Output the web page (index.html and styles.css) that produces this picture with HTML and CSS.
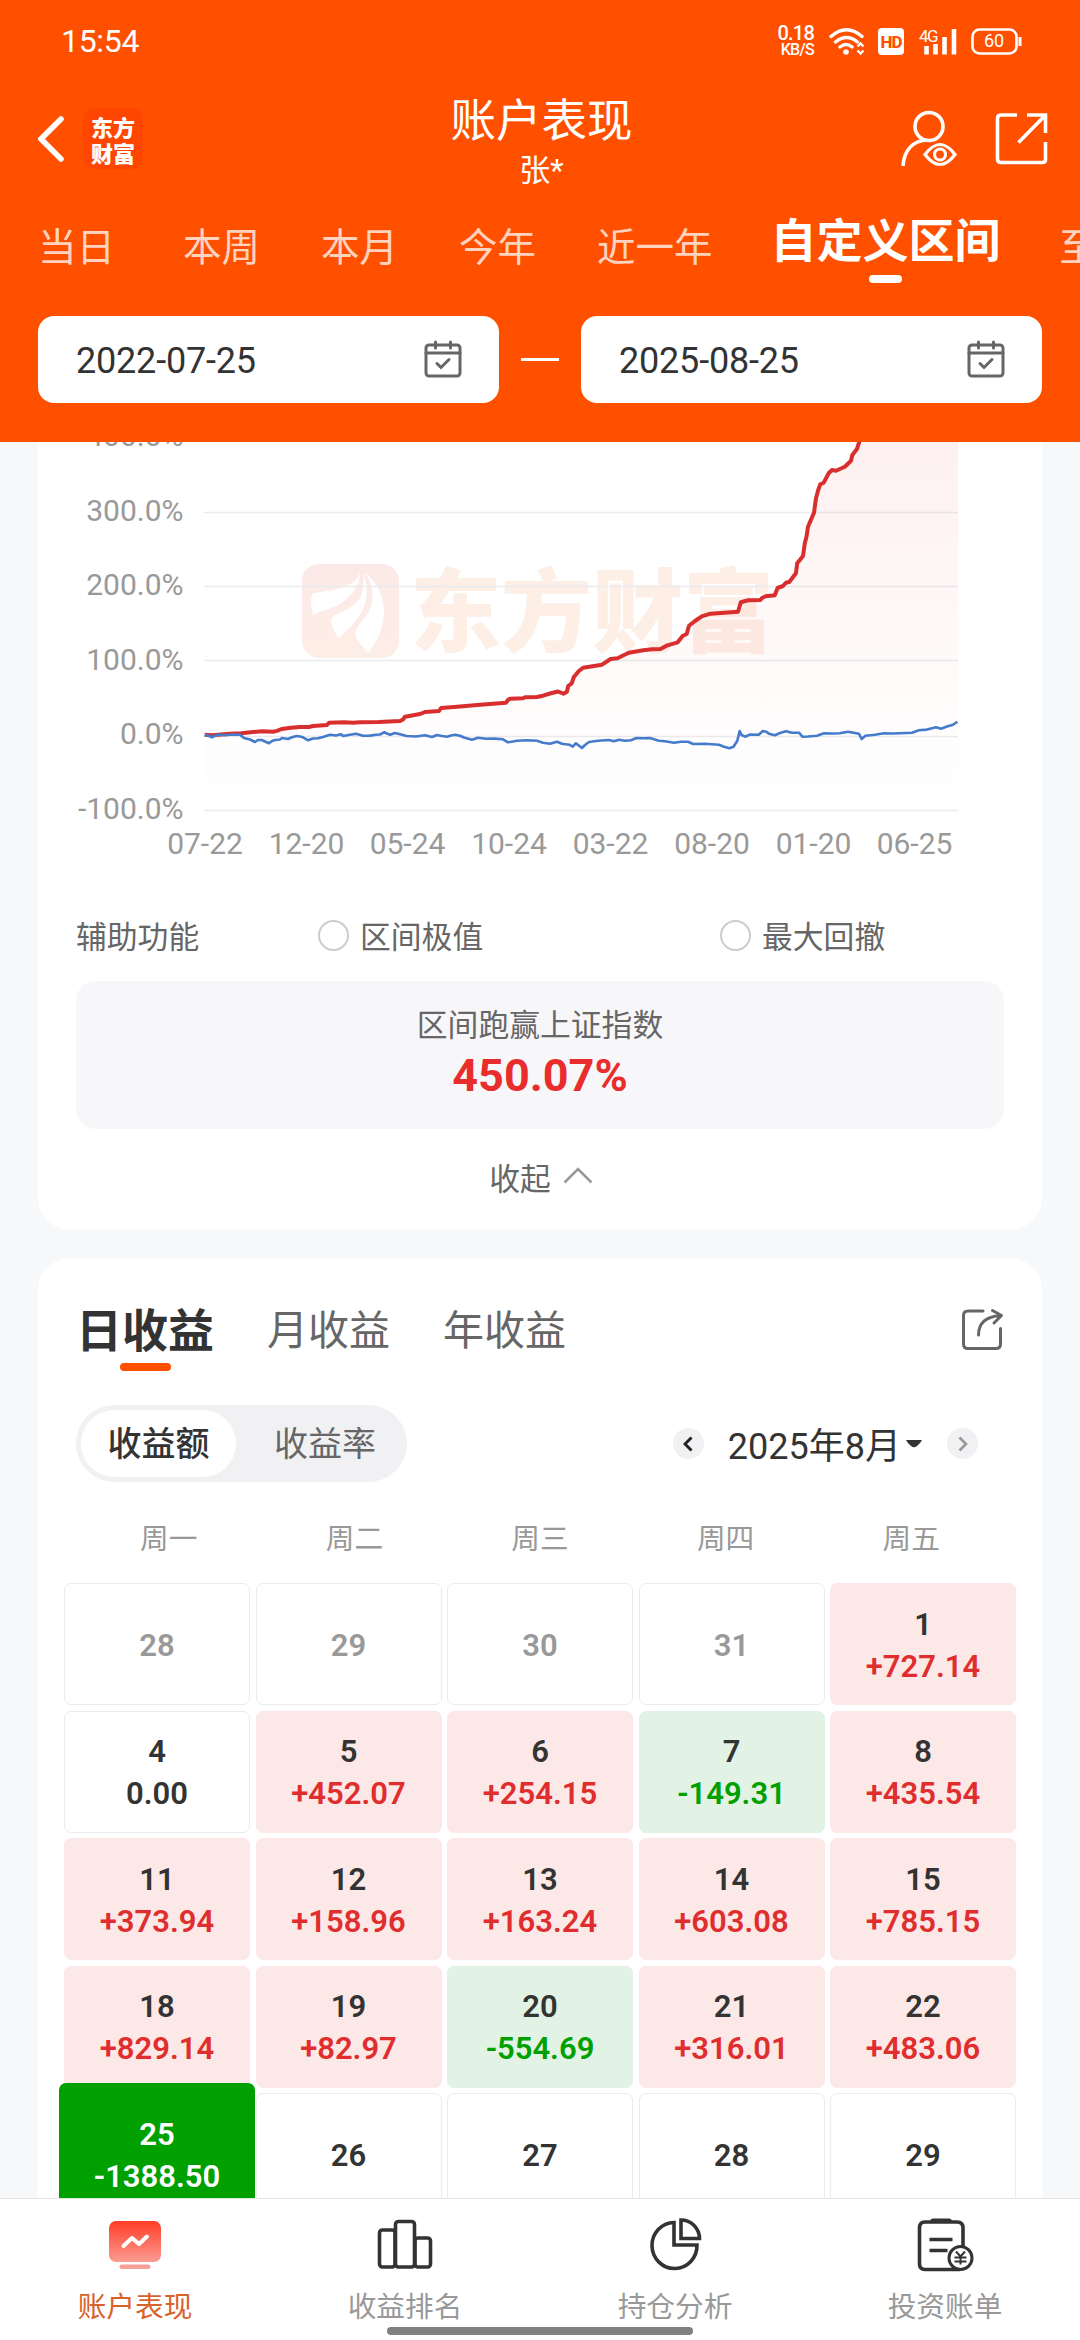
FILE: index.html
```html
<!DOCTYPE html>
<html lang="zh-CN">
<head>
    <meta charset="UTF-8">
    <meta name="viewport" content="width=device-width, initial-scale=1.0">
    <title>账户表现</title>
    <link rel="stylesheet" href="styles.css">
</head>
<body>
    <header class="header">
        <div class="status">
            <span class="time">15:54</span>
            <div class="speed"><b>0.18</b><small>KB/S</small></div>
            <svg class="status-icons" width="194" height="30" viewBox="829 25 194 30" fill="none" stroke="#fff" stroke-width="3.4">
                <path d="M831 35.500q15.500-13.500 31 0M835.500 41q11-9 22 0M840 46q6-5 12 0" stroke-linecap="round"/>
                <circle cx="846" cy="51" r="2.800" fill="#fff" stroke="none"/>
                <path d="M857.500 45.500l3-3 3 3M857.500 49.500l3 3 3-3" stroke-width="2.400"/>
                <rect x="878" y="27" width="26" height="27" rx="4" fill="#fff" stroke="none"/>
                <text x="891" y="47" class="hd">HD</text>
                <text x="919" y="41" class="net">4G</text>
                <path d="M926.500 45v8.500M935.500 43v10.500M944.500 36v17.500M954 28v25.500" stroke-width="4.600"/>
                <rect x="972.500" y="28.500" width="44" height="24" rx="7" stroke-width="2.600"/>
                <path d="M1020 36v9" stroke-width="3"/>
                <text x="994" y="46" class="bat">60</text>
            </svg>
        </div>
        <div class="titlebar">
            <svg class="back" width="27" height="46" viewBox="0 0 27 46" fill="none" stroke="#fff" stroke-width="5.500" stroke-linecap="round"><path d="M23 3L3 23l20 20"/></svg>
            <div class="logo">东方<br>财富</div>
            <div class="title">
                <h1>账户表现</h1>
                <p>张*</p>
            </div>
            <svg class="user" width="58" height="58" viewBox="900 110 58 58" fill="none" stroke="#fff" stroke-width="3.600">
                <circle cx="929" cy="126.500" r="14"/>
                <path d="M903 166c1-16 10-25 23-26" />
                <path d="M925 154.500q15-20 30 0q-15 20-30 0z" stroke-width="3.200"/>
                <circle cx="940" cy="154.500" r="5.500" stroke-width="3.200"/>
            </svg>
            <svg class="open" width="54" height="54" viewBox="995 112 54 54" fill="none" stroke="#fff" stroke-width="3.600">
                <path d="M1017 115h-16q-3.500 0-3.500 3.500v40.500q0 3.500 3.500 3.500h41.500q3 0 3-3v-17.500M1027 115h18.500v18M1045 115.500l-26.500 27"/>
            </svg>
        </div>
        <nav class="ranges">
            <span class="first">当日</span>
            <span>本周</span>
            <span>本月</span>
            <span>今年</span>
            <span>近一年</span>
            <span class="active">自定义区间</span>
            <span>至今</span>
        </nav>
        <div class="dates">
            <div class="date"><span>2022-07-25</span>
                <svg width="38" height="38" viewBox="0 0 38 38" fill="none" stroke="#666" stroke-width="3" stroke-linecap="round"><rect x="2" y="5" width="34" height="31" rx="3"/><path d="M2 13h34M11.500 2v6M26.500 2v6"/><path d="M13 23.500l4 4 8-8"/></svg>
            </div>
            <i class="dash"></i>
            <div class="date"><span>2025-08-25</span>
                <svg width="38" height="38" viewBox="0 0 38 38" fill="none" stroke="#666" stroke-width="3" stroke-linecap="round"><rect x="2" y="5" width="34" height="31" rx="3"/><path d="M2 13h34M11.500 2v6M26.500 2v6"/><path d="M13 23.500l4 4 8-8"/></svg>
            </div>
        </div>
    </header>

    <main class="content">
        <section class="card chart-card">
            <svg class="chart" width="1004" height="438" viewBox="38 442 1004 438">
                <defs>
                    <linearGradient id="area" gradientUnits="userSpaceOnUse" x1="0" y1="430" x2="0" y2="800">
                        <stop offset="0" stop-color="#f03030" stop-opacity=".075"/>
                        <stop offset=".8" stop-color="#f03030" stop-opacity=".012"/>
                        <stop offset="1" stop-color="#8080ff" stop-opacity=".006"/>
                    </linearGradient>
                    <linearGradient id="mark" x1="0" y1="0" x2="0" y2="1">
                        <stop offset="0" stop-color="#fce9e7"/>
                        <stop offset="1" stop-color="#fdeee6"/>
                    </linearGradient>
                </defs>
                <!-- watermark -->
                <rect x="302" y="564" width="97" height="94" rx="17" fill="url(#mark)"/>
                <g fill="#fff">
                    <path d="M360 572c-3 14-22 18-47 21-3 5-2 13 0 22 10-6 22-6 31-14 10-8 16-17 16-29z"/>
                    <path d="M363 573c3 27-8 33-24 40-8 4-10 8-6 15 2 5 4 8 6 10 17-15 36-34 24-65z"/>
                    <path d="M365 573c21 15 28 51 3 80-5-6-10-11-12-16-2-10 4-12 10-21 10-14 8-30-1-43z"/>
                </g>
                <text x="592" y="645" class="watermark">东方财富</text>
                <!-- grid -->
                <path d="M204 512.500H958M204 586.500H958M204 660.500H958M204 736.500H958M204 810.500H958" stroke="#e9ebed" stroke-width="1.500"/>
                <path fill="url(#area)" d="M204.700 734.700L253 732 273 731.700 282 729 313 726 327 725 329 722.700 400 721 405 716.700 425 712 439 711 441 708 480 704.700 506 702.700 510 698.700 537 697 558 691.700 563.400 693.700 567 691.700 568 686 572 683 574 677 579 671 583 667.700 602 664.700 611 659 629 652.700 643 650 660 649 678 642 683 636 687 634 689 625.700 702 616 710 613.700 738 611.700 741 602 760 600 766 596 775 595 778 588 789 582 796 573 797 563 803 556 808 527 814 513 818 490 832 470 845 467 851 461 859 442 864 430H958V800H204z"/>
                <path class="line-red" d="M204.700 734.700L212 735.200 230 733.700 241 733.200 253 732 262 731.300 273 731.700 277 730.900 281.700 729 291 727.700 300 727 309 727 313 726 327 725 329 722.700 344 722.300 353 722.800 360 722.300 379 722 400 721 403 719.500 405 716.700 420 714 425 712 439 711 441 708 457 706.700 480 704.700 506 702.700 508 700 510 698.700 523 698.200 525 697.200 537 697 543 695.700 550 693.500 558 691.500 563.400 693.700 566.900 691.700 568.200 686 571.700 683.300 573.700 677.300 578.600 671.300 583 667.700 602 664.700 610.600 659 617.500 658.200 622 656 628.800 652.700 643.300 650.300 652 649.300 660.500 649 667.400 645.300 677.700 642.300 682.600 636 686.700 634 689 625.700 695 621 701.800 616.300 710.500 613.700 738 611.700 740.800 602.300 748.300 600.300 760.400 600 762 598 765.600 596.300 774.800 595.300 777.600 588 783 586 785.900 582.700 789.300 582 795.900 573.300 797.200 563.300 803 556 804.800 543.300 806.500 536.700 808 526.700 814 512.700 816 498.300 818.200 490 820.300 484.300 823.700 482.700 828.600 473.300 832 470 836 470.700 844.800 466.700 851 460.700 852.300 455 856.800 449.300 859.200 442 864 430"/>
                <path class="line-blue" d="M204.700 735L208 735.500 212 737.300 216 735 220 734.700 226 735.300 232 734.500 240 734.700 244 738 250 739.500 255 742 258 740 261.700 740 265 741.500 269 743.300 272 741 275 740 280 739.500 282 738 288 739 292 737.300 296.700 736 300 736.500 303 737.300 308 740.300 313 738.500 318 738.200 323 737 330 734.700 336 735.500 341 734.200 343 736 350 734.700 356 733.700 363 735.700 370 735.600 376 734.700 380 734.500 384 732.300 390 734.700 395 733 400 734.300 406.700 736 416 736.500 425 735.300 432 737 437 735 442 736 447 736.700 451 735.500 455 734.700 460 735.700 464 737.500 472 739.700 478 737.700 486 738.800 494 738.600 503 739.300 508 742.300 513 741.500 517 740.700 527 740.200 537 740.700 543 742.800 550 743.700 557 741.700 562 743.700 569.300 744.700 572.700 746.700 575.800 743.300 582 748 585 745 589 742 598 740.800 609 740 614 741.300 619 739.700 625 740.800 631 740.300 636.400 738 643 738.300 650 738 658.800 740.700 665 741.300 674 742.700 681 741.800 688 741.700 693 744 705 743.800 719 744.700 724 746.700 729.400 748.300 733.500 746.700 737.300 740.700 739.700 731 741.500 735 745.600 736.700 750 734.500 758.700 734.700 762.800 731 766 731.700 769 733.700 774.800 735.300 780 733 786 731.300 792 732.700 799 732.700 802.400 736.700 808 736.500 817 735.700 824 733.300 832 733.500 839.600 733.300 848 731.700 859 733.700 861.600 739 865.400 735.700 875 734.800 884 733.300 893 733.500 912 732.700 918.800 730.300 927 729.600 936 727.300 941 728.700 947 726.500 953 724.700 957.400 721.700"/>
                <g class="ylabels">
                    <text x="183.500" y="446">400.0%</text>
                    <text x="183.500" y="520.500">300.0%</text>
                    <text x="183.500" y="595">200.0%</text>
                    <text x="183.500" y="670">100.0%</text>
                    <text x="183.500" y="744">0.0%</text>
                    <text x="183.500" y="819">-100.0%</text>
                </g>
                <g class="xlabels">
                    <text x="205" y="854">07-22</text>
                    <text x="306.500" y="854">12-20</text>
                    <text x="407.500" y="854">05-24</text>
                    <text x="509" y="854">10-24</text>
                    <text x="610.500" y="854">03-22</text>
                    <text x="712" y="854">08-20</text>
                    <text x="813.500" y="854">01-20</text>
                    <text x="914.500" y="854">06-25</text>
                </g>
            </svg>
            <div class="options">
                <span class="option-title">辅助功能</span>
                <label class="option"><i></i><span>区间极值</span></label>
                <label class="option"><i></i><span>最大回撤</span></label>
            </div>
            <div class="beat">
                <p>区间跑赢上证指数</p>
                <strong>450.07%</strong>
            </div>
            <div class="fold">收起
                <svg width="30" height="17" viewBox="0 0 30 17" fill="none" stroke="#999" stroke-width="2.600"><path d="M1.500 15.500L15 2l13.500 13.500"/></svg>
            </div>
        </section>

        <section class="card income">
            <div class="tabs">
                <span class="active">日收益</span>
                <span>月收益</span>
                <span>年收益</span>
                <svg width="43" height="43" viewBox="961 1308 43 43" fill="none" stroke="#666" stroke-width="3" stroke-linecap="round" stroke-linejoin="round"><path d="M983 1311h-15q-4.500 0-4.500 4.500v28.500q0 4.500 4.500 4.500h28q4.500 0 4.500-4.500v-15.500M978.500 1335c0-12 7-18.500 22-19.500M992.500 1310.500l9 5-7.500 7.500"/></svg>
            </div>
            <div class="controls">
                <div class="switch"><span class="on">收益额</span><span>收益率</span></div>
                <div class="month">
                    <span class="arrow"><svg width="10" height="16" viewBox="0 0 10 16" fill="none" stroke="#222" stroke-width="3"><path d="M8.500 1.500L2 8l6.500 6.500"/></svg></span>
                    <b>2025年8月</b>
                    <svg class="caret" width="16" height="8" viewBox="0 0 16 8"><path d="M0 0h16q-1 2.500-5 6-3 2.500-6 0-4-3.500-5-6z" fill="#333"/></svg>
                    <span class="arrow"><svg width="10" height="16" viewBox="0 0 10 16" fill="none" stroke="#999" stroke-width="2.600"><path d="M1.500 1.500L8 8l-6.500 6.500"/></svg></span>
                </div>
            </div>
            <div class="week"><span>周一</span><span>周二</span><span>周三</span><span>周四</span><span>周五</span></div>
            <div class="days">
                <div class="day out">28</div>
                <div class="day out">29</div>
                <div class="day out">30</div>
                <div class="day out">31</div>
                <div class="day up">1<em>+727.14</em></div>
                <div class="day">4<em>0.00</em></div>
                <div class="day up">5<em>+452.07</em></div>
                <div class="day up">6<em>+254.15</em></div>
                <div class="day down">7<em>-149.31</em></div>
                <div class="day up">8<em>+435.54</em></div>
                <div class="day up">11<em>+373.94</em></div>
                <div class="day up">12<em>+158.96</em></div>
                <div class="day up">13<em>+163.24</em></div>
                <div class="day up">14<em>+603.08</em></div>
                <div class="day up">15<em>+785.15</em></div>
                <div class="day up">18<em>+829.14</em></div>
                <div class="day up">19<em>+82.97</em></div>
                <div class="day down">20<em>-554.69</em></div>
                <div class="day up">21<em>+316.01</em></div>
                <div class="day up">22<em>+483.06</em></div>
                <div class="day selected">25<em>-1388.50</em></div>
                <div class="day">26</div>
                <div class="day">27</div>
                <div class="day">28</div>
                <div class="day">29</div>
            </div>
        </section>
    </main>

    <footer class="tabbar">
        <div class="item current">
            <svg width="60" height="56" viewBox="105 2216 60 56">
                <defs><linearGradient id="red" x1="0" y1="0" x2="0" y2="1"><stop offset="0" stop-color="#ff3d26"/><stop offset="1" stop-color="#fb9c92"/></linearGradient></defs>
                <rect x="109" y="2221" width="52" height="41" rx="7" fill="url(#red)"/>
                <rect x="119.500" y="2264.500" width="31" height="4.500" rx="2" fill="#f5a198"/>
                <path d="M123.500 2246l8.500-8 7 6 8-7.500" fill="none" stroke="#fff" stroke-width="4" stroke-linecap="round" stroke-linejoin="round"/>
            </svg>
            <span>账户表现</span>
        </div>
        <div class="item">
            <svg width="60" height="56" viewBox="375 2216 60 56" fill="none" stroke="#333" stroke-width="3.600"><rect x="379.500" y="2230" width="15.500" height="37" rx="3"/><rect x="395.500" y="2221.500" width="19" height="45.500" rx="3"/><rect x="415" y="2238" width="15.500" height="29" rx="3"/></svg>
            <span>收益排名</span>
        </div>
        <div class="item">
            <svg width="60" height="56" viewBox="645 2216 60 56" fill="none" stroke="#333" stroke-width="3.600"><path d="M674 2222.500a22.500 23 0 1 0 23 22.500h-23zM681 2220v18.500h18.500a18.500 18.500 0 0 0-18.500-18.500z"/></svg>
            <span>持仓分析</span>
        </div>
        <div class="item">
            <svg width="60" height="56" viewBox="915 2216 60 56" fill="none" stroke="#333" stroke-width="3.600">
                <path d="M963 2246v-18q0-6-6-6h-32q-5.500 0-5.500 6v36q0 5.500 5.500 5.500h35"/>
                <path d="M930 2220.500q1-2 3-2h16q2 0 3 2v2.500h-22z" fill="#333" stroke="none"/>
                <path d="M929.500 2239.500h23M929.500 2250.500h18"/>
                <circle cx="960.500" cy="2258" r="11.500" fill="#fff" stroke-width="3"/>
                <path d="M956 2251.500l4.500 5 4.500-5M960.500 2256v8.500M954.500 2257.500h12M954.500 2261.500h12" stroke-width="2"/>
            </svg>
            <span>投资账单</span>
        </div>
        <i class="home"></i>
    </footer>
</body>
</html>
```
FILE: styles.css
```css
* { box-sizing: border-box; margin: 0; padding: 0; }
body { width: 1080px; height: 2340px; overflow: hidden; display: flex; flex-direction: column; background: #f7f8fa; color: #333; font-family: Roboto, "Noto Sans CJK SC", sans-serif; }
svg { display: block; flex: none; }
i, em { font-style: normal; }

/* header */
.header { height: 442px; flex: none; background: #ff5000; color: #fff; }
.status { height: 82px; display: flex; align-items: center; padding: 0 57px 0 61px; }
.time { flex: 1; font-size: 32px; line-height: 40px; letter-spacing: -.3px; }
.speed { width: 40px; margin-right: 15px; text-align: right; line-height: 1; white-space: nowrap; }
.speed b { display: block; font-size: 20px; font-weight: 500; line-height: 17px; letter-spacing: -.8px; }
.speed small { display: block; font-size: 16px; font-weight: 500; line-height: 15px; letter-spacing: -.7px; }
.status-icons text { stroke: none; fill: #fff; font-family: Roboto, sans-serif; }
.status-icons .hd { fill: #ff5000; font-size: 17px; font-weight: 800; text-anchor: middle; letter-spacing: -1px; }
.status-icons .net { font-size: 17px; letter-spacing: -1.5px; }
.status-icons .bat { font-size: 18px; text-anchor: middle; }

.titlebar { height: 120px; display: flex; align-items: flex-start; padding: 26px 31px 0 38px; }
.back { margin-top: 8px; margin-right: 18px; }
.logo { width: 60px; height: 61px; padding-top: 5px; border-radius: 12px; background: #ff4600; font: 900 22px/26px "Noto Sans CJK SC", sans-serif; text-align: center; }
.title { flex: 1; margin: -12px 0 0 10px; padding-left: 30px; text-align: center; }
.title h1 { font-size: 45.5px; line-height: 52px; font-weight: 400; }
.title p { font-size: 31px; line-height: 46px; }
.user { margin-right: 37px; margin-top: 2px; }
.open { margin-top: 4px; }

.ranges { height: 114px; display: flex; padding-left: 38px; white-space: nowrap; overflow: hidden; font-size: 38.5px; line-height: 92px; color: rgba(255, 255, 255, .75); }
.ranges span { margin-right: 61px; }
.ranges .first { margin-right: 68px; }
.ranges .active { position: relative; margin-left: -3px; margin-right: 59px; font-size: 46px; line-height: 79px; font-weight: 700; color: #fff; }
.ranges .active::after { content: ""; position: absolute; left: 50%; top: 73px; width: 33px; height: 8px; margin-left: -17px; border-radius: 4px; background: #fff; }

.dates { display: flex; align-items: center; justify-content: space-between; padding: 0 38px; }
.date { width: 461px; height: 87px; display: flex; align-items: center; justify-content: space-between; padding: 0 37px 0 38px; border-radius: 16px; background: #fff; color: #333; font-size: 36px; letter-spacing: -.2px; }
.date span { padding-top: 3px; }
.date svg { margin-bottom: 1px; }
.dash { width: 38px; height: 3px; background: #fff; }

/* cards */
.content { flex: 1; min-height: 0; overflow: hidden; }
.card { margin: 0 38px; background: #fff; }
.chart-card { height: 787px; border-radius: 0 0 30px 30px; overflow: hidden; }
.watermark { font: 900 91px "Noto Sans CJK SC", sans-serif; fill: #fdeee6; text-anchor: middle; }
.line-red { fill: none; stroke: #d82e2e; stroke-width: 4; stroke-linejoin: round; }
.line-blue { fill: none; stroke: #447bcb; stroke-width: 2.6; stroke-linejoin: round; }
.ylabels, .xlabels { font-size: 30px; fill: #999; }
.ylabels { text-anchor: end; }
.xlabels { text-anchor: middle; }

.options { height: 101px; display: grid; grid-template-columns: 242px 402px 1fr; align-items: center; padding: 10px 38px 0; font-size: 30.8px; color: #666; }
.option-title { padding-bottom: 2px; }
.option { display: flex; align-items: center; }
.option i { width: 31px; height: 31px; margin-right: 11px; border: 2.5px solid #ccc; border-radius: 50%; }
.option span { padding-bottom: 2px; }
.beat { height: 148px; margin: 0 38px; padding-top: 23px; border-radius: 20px; background: #f7f7fa; text-align: center; }
.beat p { font-size: 30.8px; line-height: 44px; color: #666; }
.beat strong { display: block; font-size: 45px; line-height: 56px; font-weight: 700; color: #e92c2c; }
.fold { display: flex; align-items: center; justify-content: center; height: 95px; padding-left: 2px; font-size: 30.8px; color: #666; }
.fold svg { margin: -2px 0 0 12px; }

.income { margin-top: 30px; padding: 0 26px; border-radius: 30px 30px 0 0; height: 1000px; }
.tabs { height: 146px; display: flex; padding: 44px 12px 0; font-size: 41px; line-height: 57px; color: #666; }
.tabs span { margin-right: 53px; }
.tabs .active { position: relative; font-size: 46px; font-weight: 700; color: #333; }
.tabs .active::after { content: ""; position: absolute; left: 44px; top: 60px; width: 51px; height: 8px; border-radius: 4px; background: #ff5000; }
.tabs svg { margin: 5px 0 0 auto; }
.controls { display: flex; justify-content: space-between; align-items: center; padding: 0 38px 0 12px; }
.switch { width: 331px; height: 77px; display: flex; padding: 5px; border-radius: 39px; background: #f1f1f4; font-size: 34px; line-height: 69px; color: #666; text-align: center; }
.switch span { flex: 1; height: 67px; padding-left: 12px; }
.switch .on { flex: 0 0 155px; padding-left: 0; border-radius: 34px; background: #fff; color: #333; font-weight: 500; }
.month { display: flex; align-items: center; }
.month b { margin: -2px 5px 0 24px; font-size: 36px; font-weight: 400; }
.caret { margin-right: 25px; }
.arrow { width: 31px; height: 31px; display: flex; align-items: center; justify-content: center; border-radius: 50%; background: #f1f1f4; }
.week { display: grid; grid-template-columns: repeat(5, 1fr); height: 101px; padding: 0 12px; font-size: 28.7px; line-height: 114px; color: #999; text-align: center; }

.days { display: grid; grid-template-columns: repeat(5, 1fr); grid-auto-rows: 122px; gap: 5.5px; }
.day { display: flex; flex-direction: column; align-items: center; justify-content: center; padding-top: 3px; border: 1px solid #ebebeb; border-radius: 7px; background: #fff; font-size: 31px; line-height: 42px; font-weight: 600; }
.out { color: #999; }
.up { border-color: #fce8e7; background: #fce8e7; }
.up em { color: #e02d2d; }
.down { border-color: #e2f3e5; background: #e2f3e5; }
.down em { color: #00a000; }
.selected { z-index: 1; margin: -10px -5px; border: none; background: #00a000; color: #fff; }

/* bottom bar */
.tabbar { position: relative; height: 142px; flex: none; display: flex; border-top: 1px solid #e6e6e6; background: #fff; }
.item { flex: 1; display: flex; flex-direction: column; align-items: center; padding-top: 17px; font-size: 28.7px; line-height: 40px; color: #999; }
.item span { margin-top: 15px; }
.current { color: #d9622b; }
.home { position: absolute; left: 387px; top: 128px; width: 306px; height: 8px; border-radius: 4px; background: #808080; }
```
